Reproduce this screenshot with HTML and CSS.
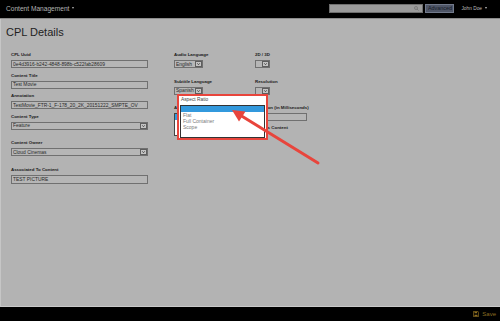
FILE: index.html
```html
<!DOCTYPE html>
<html lang="en">
<head>
    <meta charset="UTF-8">
    <meta name="viewport" content="width=device-width, initial-scale=1.0">
    <title>CPL Details</title>
    <link rel="stylesheet" href="styles.css">
</head>
<body>
    <!-- Top navigation -->
    <header class="topbar">
        <div class="brand">Content Management <span class="caret"></span></div>
        <div class="top-right">
            <div class="search">
                <svg viewBox="0 0 10 10"><circle cx="4" cy="4" r="3" fill="none" stroke="#6e6e6e" stroke-width="1.4"/><line x1="6.2" y1="6.2" x2="9" y2="9" stroke="#6e6e6e" stroke-width="1.6"/></svg>
            </div>
            <button class="advanced">Advanced</button>
            <div class="user">John Doe <span class="caret"></span></div>
        </div>
    </header>

    <main class="content">
        <h1>CPL Details</h1>

        <div class="form">
            <!-- Left column -->
            <div class="col-left">
                <div class="field">
                    <label>CPL Uuid</label>
                    <input type="text" value="0e4d3916-b242-4848-898b-c522fab28609" readonly>
                </div>
                <div class="field">
                    <label>Content Title</label>
                    <input type="text" value="Test Movie" readonly>
                </div>
                <div class="field">
                    <label>Annotation</label>
                    <input type="text" value="TestMovie_FTR-1_F-178_20_2K_20151222_SMPTE_OV" readonly>
                </div>
                <div class="field wide-gap">
                    <label>Content Type</label>
                    <div class="select"><span class="value">Feature</span><span class="arrow"><svg viewBox="0 0 8 8"><polyline points="1.5,2.5 4,5.5 6.5,2.5" fill="none" stroke="#222" stroke-width="1.3"/></svg></span></div>
                </div>
                <div class="field wide-gap">
                    <label>Content Owner</label>
                    <div class="select"><span class="value">Cloud Cinemas</span><span class="arrow"><svg viewBox="0 0 8 8"><polyline points="1.5,2.5 4,5.5 6.5,2.5" fill="none" stroke="#222" stroke-width="1.3"/></svg></span></div>
                </div>
                <div class="field">
                    <label>Associated To Content</label>
                    <input type="text" class="tall" value="TEST PICTURE" readonly>
                </div>
            </div>

            <!-- Middle column -->
            <div class="col-mid">
                <div class="field">
                    <label>Audio Language</label>
                    <div class="select small"><span class="value">English</span><span class="arrow"><svg viewBox="0 0 8 8"><polyline points="1.5,2.5 4,5.5 6.5,2.5" fill="none" stroke="#222" stroke-width="1.3"/></svg></span></div>
                </div>
                <div class="field">
                    <label>2D / 3D</label>
                    <div class="select tiny"><span class="value"></span><span class="arrow"><svg viewBox="0 0 8 8"><polyline points="1.5,2.5 4,5.5 6.5,2.5" fill="none" stroke="#222" stroke-width="1.3"/></svg></span></div>
                </div>
                <div class="field">
                    <label>Subtitle Language</label>
                    <div class="select small"><span class="value">Spanish</span><span class="arrow"><svg viewBox="0 0 8 8"><polyline points="1.5,2.5 4,5.5 6.5,2.5" fill="none" stroke="#222" stroke-width="1.3"/></svg></span></div>
                </div>
                <div class="field">
                    <label>Resolution</label>
                    <div class="select tiny"><span class="value"></span><span class="arrow"><svg viewBox="0 0 8 8"><polyline points="1.5,2.5 4,5.5 6.5,2.5" fill="none" stroke="#222" stroke-width="1.3"/></svg></span></div>
                </div>
                <div class="field">
                    <label>Aspect Ratio</label>
                    <!-- covered by the callout, only its edge shows -->
                    <div class="listbox">
                        <div class="opt selected"></div>
                    </div>
                </div>
                <div class="field">
                    <label>Duration (in Milliseconds)</label>
                    <input type="text" class="duration" value="" readonly>
                    <div class="check"><span class="box"></span>Has Content</div>
                </div>
            </div>
        </div>
    </main>

    <!-- Zoomed callout of the aspect ratio list -->
    <div class="callout">
        <div class="callout-title">Aspect Ratio</div>
        <div class="callout-list">
            <div class="opt selected"></div>
            <div class="opt">Flat</div>
            <div class="opt">Full Container</div>
            <div class="opt">Scope</div>
        </div>
    </div>

    <svg class="pointer" viewBox="0 0 500 321">
        <line x1="318" y1="163" x2="240" y2="115" stroke="#e8453c" stroke-width="3" stroke-linecap="round"/>
        <polygon points="232,110 245.5,111.5 239,121.5" fill="#e8453c"/>
    </svg>

    <footer class="bottombar">
        <span class="save">
            <svg viewBox="0 0 8 8"><path d="M0.5 0.5H6.5L7.5 1.5V7.5H0.5Z" fill="none" stroke="#8d6e22" stroke-width="1"/><rect x="2" y="1" width="3.5" height="2" fill="#8d6e22"/><rect x="2" y="5" width="4" height="2" fill="#8d6e22"/></svg>
            Save
        </span>
    </footer>
</body>
</html>
```

FILE: styles.css
```css
* {
    box-sizing: border-box;
}

body {
    margin: 0;
    width: 500px;
    height: 321px;
    position: relative;
    overflow: hidden;
    background: #000;
    font-family: "Liberation Sans", Arial, sans-serif;
}

/* Top bar */
.topbar {
    height: 19px;
    padding: 0 13px 2px 6px;
    background: #000;
    border-bottom: 1px solid #8c8c8c;
    display: flex;
    justify-content: space-between;
    align-items: center;
}

.brand {
    color: #b4b4b4;
    font-size: 6.6px;
    display: flex;
    align-items: center;
    gap: 3px;
}

.caret {
    width: 0;
    height: 0;
    border-left: 1.5px solid transparent;
    border-right: 1.5px solid transparent;
    border-top: 2px solid currentColor;
}

.top-right {
    display: flex;
    align-items: center;
}

.search {
    width: 94px;
    height: 9px;
    background: #9a9a9a;
    border: 1px solid #6e6e6e;
    display: flex;
    justify-content: flex-end;
    align-items: center;
    padding-right: 3px;
}

.search svg {
    width: 5px;
    height: 5px;
}

.advanced {
    margin: 0 0 0 2px;
    height: 9px;
    padding: 0 1.5px;
    background: #4e5566;
    border: 1px solid #727a8c;
    color: #151a26;
    font-family: inherit;
    font-size: 5.4px;
    line-height: 7px;
}

.user {
    margin-left: 7px;
    color: #bdbdbd;
    font-size: 4.8px;
    display: flex;
    align-items: center;
    gap: 3px;
}

/* Main panel */
.content {
    height: 288px;
    padding: 7px 0 0 5px;
    background: #b3b3b3;
    border-left: 1px solid #c6c6c6;
    border-bottom: 1px solid #c9c9c9;
}

h1 {
    margin: 0;
    font-size: 11px;
    line-height: 13px;
    font-weight: normal;
    color: #1e1e1e;
}

.form {
    display: flex;
    margin-top: 13px;
    padding-left: 5px;
}

.col-left {
    width: 137px;
}

.col-mid {
    margin-left: 26px;
    display: grid;
    grid-template-columns: 81px 70px;
    row-gap: 10.5px;
    align-content: start;
}

.field {
    margin-bottom: 4.5px;
}

.col-mid .field {
    margin-bottom: 0;
}

.field.wide-gap {
    margin-bottom: 10.5px;
}

label {
    display: block;
    font-size: 4.4px;
    font-weight: bold;
    line-height: 6px;
    margin-bottom: 2px;
    color: #1a1a1a;
    white-space: nowrap;
}

input[type="text"] {
    display: block;
    width: 137px;
    height: 8px;
    margin: 0;
    padding: 0 1px;
    border: 1px solid #707070;
    background: #b6b6b6;
    color: #2a2a2a;
    font-family: inherit;
    font-size: 4.9px;
    outline: none;
}

input.tall {
    height: 9px;
    margin-top: 1px;
}

input.duration {
    width: 52px;
    margin-top: 0.5px;
}

.select {
    width: 137px;
    height: 8px;
    border: 1px solid #707070;
    background: #b6b6b6;
    display: flex;
    align-items: center;
    padding-left: 1px;
}

.select.small {
    width: 29px;
}

.select.tiny {
    width: 15px;
}

.select .value {
    flex: 1;
    font-size: 4.9px;
    color: #2a2a2a;
    white-space: nowrap;
    overflow: hidden;
}

.select .arrow {
    width: 7px;
    height: 6px;
    margin-right: 0.5px;
    border: 1px solid #5e5e5e;
    background: #c4c4c4;
    display: flex;
}

.select .arrow svg {
    width: 100%;
    height: 100%;
}

.listbox {
    width: 75px;
    height: 23px;
    border: 1px solid #444;
    background: #fff;
    margin-top: 0.5px;
}

.opt {
    height: 6px;
    line-height: 6px;
    padding-left: 2px;
    font-size: 5px;
    color: #7a7a7a;
}

.opt.selected {
    background: #3399dd;
}

.check {
    margin-top: 4px;
    display: flex;
    align-items: center;
    gap: 2px;
    font-size: 4.4px;
    font-weight: bold;
    color: #1a1a1a;
}

.check .box {
    width: 5px;
    height: 5px;
    border: 1px solid #555;
    background: #ddd;
}

/* Callout over the aspect ratio list */
.callout {
    position: absolute;
    left: 177px;
    top: 94px;
    width: 91px;
    height: 46px;
    border: 2px solid #e8453c;
    background: #fff;
    padding: 1px 1px 0 1px;
}

.callout-title {
    font-size: 4.8px;
    line-height: 6px;
    color: #444;
    padding-left: 1px;
    margin-bottom: 1.5px;
}

.callout-list {
    width: 85px;
    height: 33px;
    border: 1px solid #333;
}

.pointer {
    position: absolute;
    left: 0;
    top: 0;
    width: 500px;
    height: 321px;
    pointer-events: none;
}

/* Bottom bar */
.bottombar {
    height: 14px;
    padding-right: 4px;
    display: flex;
    justify-content: flex-end;
    align-items: center;
}

.save {
    color: #8d6e22;
    font-size: 6px;
    display: flex;
    align-items: center;
    gap: 3px;
}

.save svg {
    width: 6px;
    height: 6px;
}
```
